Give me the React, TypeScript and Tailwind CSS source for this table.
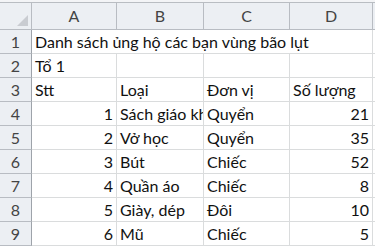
import React from 'react'

type Row = {
  n: number
  a?: string
  b?: string
  c?: string
  d?: string
  numA?: boolean
}

const rows: Row[] = [
  { n: 2, a: 'Tổ 1' },
  { n: 3, a: 'Stt', b: 'Loại', c: 'Đơn vị', d: 'Số lượng' },
  { n: 4, a: '1', b: 'Sách giáo khoa', c: 'Quyển', d: '21', numA: true },
  { n: 5, a: '2', b: 'Vở học', c: 'Quyển', d: '35', numA: true },
  { n: 6, a: '3', b: 'Bút', c: 'Chiếc', d: '52', numA: true },
  { n: 7, a: '4', b: 'Quần áo', c: 'Chiếc', d: '8', numA: true },
  { n: 8, a: '5', b: 'Giày, dép', c: 'Đôi', d: '10', numA: true },
  { n: 9, a: '6', b: 'Mũ', c: 'Chiếc', d: '5', numA: true },
]

const cols = ['A', 'B', 'C', 'D']

const cell = 'h-6 border-r border-b border-[#dadcdd] flex items-center overflow-hidden whitespace-nowrap'
const head = 'border-r border-b border-[#b8bcc2] bg-[#eceff3] flex items-center justify-center text-[#444]'

function RowHead({ n }: { n: number }) {
  return <div className={`${head} h-6 !border-r-[#9ea3aa]`}>{n}</div>
}

export default function App() {
  return (
    <div
      className="w-[375px] h-[246px] overflow-hidden bg-white text-[16px] text-[#111]"
      style={{ fontFamily: 'Lato, "Noto Sans", sans-serif' }}
    >
      <div className="h-[3px] border-b border-[#b9bdc2] bg-[#f3f4f6]" />
      <div className="grid grid-cols-[32px_85px_87px_86px_83px_2px]">
        {/* corner + column letters */}
        <div className={`${head} h-[27px] relative`}>
          <svg className="absolute right-[3px] bottom-[3px]" width="11" height="11" viewBox="0 0 11 11">
            <path d="M11 0 L11 11 L0 11 Z" fill="#c9ccd1" />
          </svg>
        </div>
        {cols.map((c) => (
          <div key={c} className={`${head} h-[27px]`}>
            {c}
          </div>
        ))}
        <div className={`${head} h-[27px] border-r-0`} />

        {/* title row spills across all columns */}
        <RowHead n={1} />
        <div className={`${cell} col-span-4 pl-[3px]`}>Danh sách ủng hộ các bạn vùng bão lụt</div>
        <div className="h-6 border-b border-[#dadcdd]" />

        {rows.map((r) => (
          <React.Fragment key={r.n}>
            <RowHead n={r.n} />
            <div className={`${cell} ${r.numA ? 'justify-end pr-[3px]' : 'pl-[3px]'}`}>{r.a}</div>
            <div className={`${cell} pl-[3px]`}>{r.b}</div>
            <div className={`${cell} pl-[3px]`}>{r.c}</div>
            <div className={`${cell} ${r.numA ? 'justify-end pr-[3px]' : 'pl-[3px]'}`}>{r.d}</div>
            <div className="h-6 border-b border-[#dadcdd]" />
          </React.Fragment>
        ))}
      </div>
    </div>
  )
}
